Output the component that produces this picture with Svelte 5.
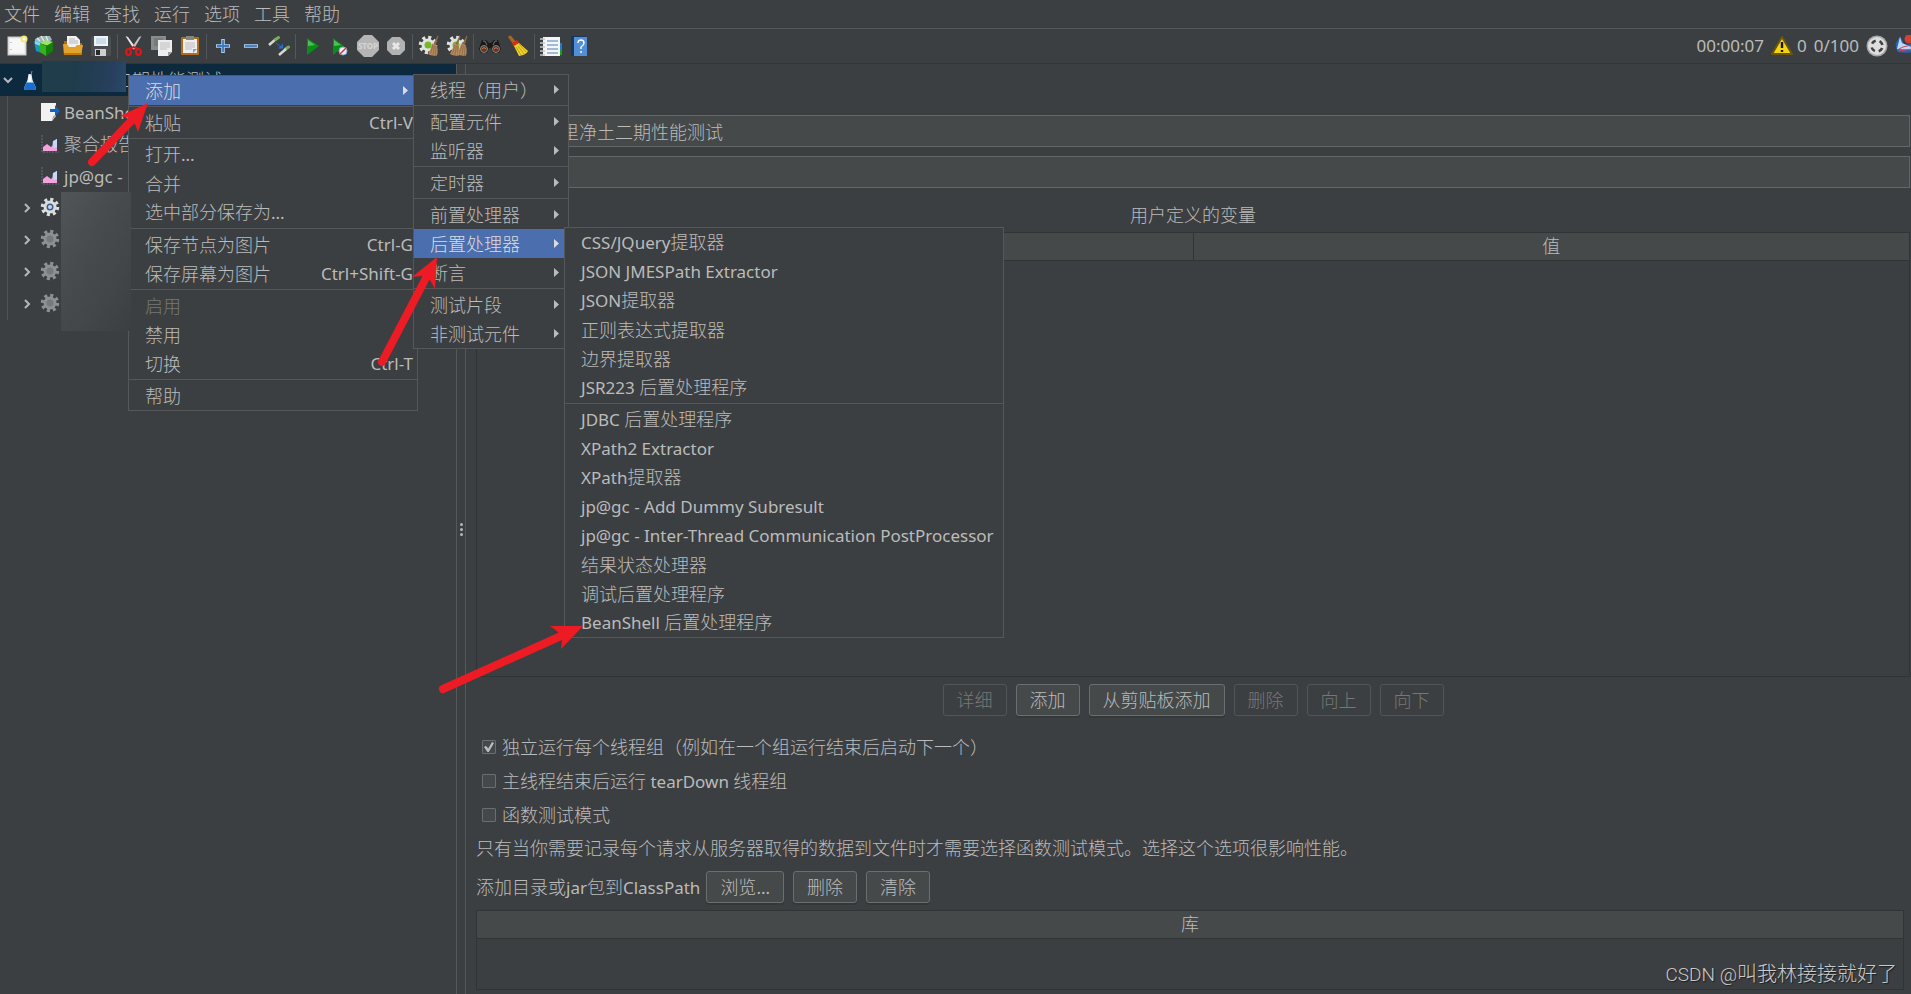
<script lang="ts">
	type MenuEntry = {
		label?: string;
		shortcut?: string;
		submenu?: boolean;
		active?: boolean;
		disabled?: boolean;
		separator?: boolean;
	};

	const separator: MenuEntry = { separator: true };

	const menuBar = ['文件', '编辑', '查找', '运行', '选项', '工具', '帮助'];

	const toolGroups = [
		['new', 'templates', 'open', 'save'],
		['cut', 'copy', 'paste'],
		['expand', 'collapse', 'toggle'],
		['start', 'start-no-timers', 'stop', 'shutdown'],
		['clear', 'clear-all'],
		['search', 'reset-search'],
		['function-helper', 'help']
	];

	const treeItems = [
		{ icon: 'preprocessor', label: 'BeanShell' },
		{ icon: 'report', label: '聚合报告' },
		{ icon: 'report', label: 'jp@gc -' }
	];

	const threadGroups = [true, false, false, false];

	const contextMenu: MenuEntry[] = [
		{ label: '添加', submenu: true, active: true },
		separator,
		{ label: '粘贴', shortcut: 'Ctrl-V' },
		separator,
		{ label: '打开...' },
		{ label: '合并' },
		{ label: '选中部分保存为...' },
		separator,
		{ label: '保存节点为图片', shortcut: 'Ctrl-G' },
		{ label: '保存屏幕为图片', shortcut: 'Ctrl+Shift-G' },
		separator,
		{ label: '启用', disabled: true },
		{ label: '禁用' },
		{ label: '切换', shortcut: 'Ctrl-T' },
		separator,
		{ label: '帮助' }
	];

	const addMenu: MenuEntry[] = [
		{ label: '线程（用户）', submenu: true },
		separator,
		{ label: '配置元件', submenu: true },
		{ label: '监听器', submenu: true },
		separator,
		{ label: '定时器', submenu: true },
		separator,
		{ label: '前置处理器', submenu: true },
		{ label: '后置处理器', submenu: true, active: true },
		{ label: '断言', submenu: true },
		separator,
		{ label: '测试片段', submenu: true },
		{ label: '非测试元件', submenu: true }
	];

	const postProcessorMenu: MenuEntry[] = [
		{ label: 'CSS/JQuery提取器' },
		{ label: 'JSON JMESPath Extractor' },
		{ label: 'JSON提取器' },
		{ label: '正则表达式提取器' },
		{ label: '边界提取器' },
		{ label: 'JSR223 后置处理程序' },
		separator,
		{ label: 'JDBC 后置处理程序' },
		{ label: 'XPath2 Extractor' },
		{ label: 'XPath提取器' },
		{ label: 'jp@gc - Add Dummy Subresult' },
		{ label: 'jp@gc - Inter-Thread Communication PostProcessor' },
		{ label: '结果状态处理器' },
		{ label: '调试后置处理程序' },
		{ label: 'BeanShell 后置处理程序' }
	];

	const variableActions = [
		{ label: '详细', enabled: false },
		{ label: '添加', enabled: true },
		{ label: '从剪贴板添加', enabled: true },
		{ label: '删除', enabled: false },
		{ label: '向上', enabled: false },
		{ label: '向下', enabled: false }
	];

	let planName = $state('里净土二期性能测试');
	let comment = $state('');

	let options = $state([
		{ label: '独立运行每个线程组（例如在一个组运行结束后启动下一个）', checked: true },
		{ label: '主线程结束后运行 tearDown 线程组', checked: false },
		{ label: '函数测试模式', checked: false }
	]);

	// Latin runs are set one size below the Chinese ones
	function runs(text: string) {
		return text.match(/[\x20-\x7e]+|[^\x20-\x7e]+/g) ?? [];
	}

	function isLatin(run: string) {
		return run.charCodeAt(0) < 127;
	}
</script>

{#snippet mixed(text: string)}
	{#each runs(text) as run}<span class:latin={isLatin(run)}>{run}</span>{/each}
{/snippet}

{#snippet broom(x: number, color: string)}
	<g transform="translate({x} 0)">
		<path d="M10 10 14.500 0.500l1 .4L12.500 11z" fill="#8a6a45" />
		<path d="M9 8.500l4.500 1.500q2 5 .5 10.500-5 1-9-1.500Q8 14 9 8.500z" fill={color} />
		<path d="M10 10 7.500 19M11.500 10.500 10 20M13 11l-.5 9.500" stroke="#7d5c37" stroke-width=".6" fill="none" />
	</g>
{/snippet}

{#snippet gear(fill: string, center: string)}
	<circle cx="10" cy="10" r="7.500" fill="none" stroke={fill} stroke-width="3.500" stroke-dasharray="3 2.890" />
	<circle cx="10" cy="10" r="6.500" {fill} />
	<circle cx="10" cy="10" r="3.500" fill={center} />
{/snippet}

{#snippet icon(name: string)}
	<svg class="icon" viewBox="0 0 22 22" aria-hidden="true">
		{#if name === 'new'}
			<rect x="2" y="2" width="18" height="18" fill="#ececec" stroke="#c4c4c4" />
			<path d="M4 4h14v14H4z" fill="#f7f7f7" />
			<path d="M5 7v1M5 14v1" stroke="#999" />
			<circle cx="18" cy="4" r="3.500" fill="#f3e779" />
			<circle cx="18" cy="4" r="1.500" fill="#fffce0" />
		{:else if name === 'templates'}
			<path d="M1 4 7 1l9 0 2 4-7 4-10-1z" fill="#9fb4b8" />
			<path d="M3 3l3 3M7 1l3 5M12 1l2 5" stroke="#e2ecee" stroke-width="1.300" />
			<path d="M0 6l8 2v10l-6-2z" fill="#1696c8" />
			<path d="M1 6l6 2v3L1 9z" fill="#7ed8f2" />
			<path d="M6 8l6-3 7 2-5 4z" fill="#9be565" />
			<path d="M6 8l6 3v10l-6-4z" fill="#37b317" />
			<path d="M12 11l7-4v9l-7 5z" fill="#167f0c" />
		{:else if name === 'open'}
			<path d="M2 6h5l2 2h11v12H2z" fill="#a9700d" />
			<path d="M5 1h9l4 4v9H5z" fill="#f2f2f2" />
			<path d="M7 4h6M7 6h9M7 8h9" stroke="#aaa" stroke-width=".8" />
			<path d="M1 9l1 11h17l2-10h-6l-2 2H7l-2-3z" fill="#e3a22a" />
			<path d="M2 18h17l-.3 2H2z" fill="#bd7a0a" />
		{:else if name === 'save'}
			<path d="M2 1h18l1 2v18H1V3z" fill="#4b4e50" />
			<path d="M4 1h14v10H4z" fill="#edf3f8" />
			<path d="M6 4h10M6 6h10M6 8h10" stroke="#9db9d1" stroke-width=".8" />
			<path d="M5 14h11v7H5z" fill="#cfcfcf" />
			<path d="M6 15h4v5H6z" fill="#292929" />
		{:else if name === 'cut'}
			<path d="M2.500 1 5 2l8 11-2 1.500z" fill="#e9e9e9" />
			<path d="M18.500 1 16 2 8.500 13l2 1.500z" fill="#c4c4c4" />
			<ellipse cx="5.500" cy="17" rx="2.400" ry="3" fill="none" stroke="#df1618" stroke-width="2.200" />
			<ellipse cx="15.500" cy="17" rx="2.400" ry="3" fill="none" stroke="#df1618" stroke-width="2.200" />
			<path d="M6 14l4.500-2 4.500 2" fill="none" stroke="#df1618" stroke-width="2" />
		{:else if name === 'copy'}
			<path d="M0 1h15v14H0z" fill="#898c8d" />
			<path d="M3 4h9M3 6h9M3 8h9M3 10h9" stroke="#66696a" />
			<path d="M7 5h14v12l-4 4H7z" fill="#ededed" />
			<path d="M9 8h10M9 10h10M9 12h10M9 14h7" stroke="#bdbdbd" />
			<path d="M17 21v-4h4z" fill="#9c9c9c" />
		{:else if name === 'paste'}
			<rect x="2" y="2" width="18" height="18" rx="1" fill="#b16d19" />
			<path d="M4 4h14v14H4z" fill="#eee" />
			<path d="M7 1h8v4H7z" fill="#83887f" />
			<path d="M6 8h10M6 10h10M6 12h10M6 14h7" stroke="#bcbcbc" />
			<path d="M14 18v-4h4z" fill="#9b9b9b" />
		{:else if name === 'expand'}
			<path d="M11 4v14M4 11h14" stroke="#a9cdf0" stroke-width="3.600" />
			<path d="M11 5v12M5 11h12" stroke="#3f78bd" stroke-width="1.800" />
		{:else if name === 'collapse'}
			<path d="M4 11h14" stroke="#a9cdf0" stroke-width="3.600" />
			<path d="M5 11h12" stroke="#3f78bd" stroke-width="1.800" />
		{:else if name === 'toggle'}
			<path d="M1 10 8 4" stroke="#d5d8d5" stroke-width="2.500" />
			<path d="M7.500 4.500 10.500 2.500M17.500 14l3-2" stroke="#77ad60" stroke-width="3" stroke-linecap="round" />
			<path d="M11 20l7-6" stroke="#d5d8d5" stroke-width="2.500" />
			<path d="M8 8l5 4" stroke="#286bd6" />
			<path d="M10 13.500h5v-5z" fill="#286bd6" />
		{:else if name === 'start'}
			<path d="M6 3l12 8-12 9z" fill="#098f18" />
			<path d="M7 5l7 5-7 1z" fill="#4fbf54" />
		{:else if name === 'start-no-timers'}
			<path d="M4 3l11 8-11 9z" fill="#098f18" />
			<path d="M5 5l7 5-7 1z" fill="#4fbf54" />
			<circle cx="14" cy="16" r="4" fill="#e9f1fb" stroke="#86add8" />
			<path d="M11 19l6-6" stroke="#df2c2c" stroke-width="1.500" />
		{:else if name === 'stop'}
			<path d="M7 0h8l7 7v8l-7 7H7l-7-7V7z" fill="#b5b5b5" />
			<text x="11" y="14" text-anchor="middle" font-size="8" font-weight="700" fill="#d5d5d5">STOP</text>
		{:else if name === 'shutdown'}
			<path d="M7 2h8l5 5v8l-5 5H7l-5-5V7z" fill="#b2b2b2" />
			<path d="M8 8l6 6M14 8l-6 6" stroke="#e8e8e8" stroke-width="3" />
		{:else if name === 'clear'}
			{@render gear('#e2e3e1', '#73b928')}
			{@render broom(5, '#b48b5f')}
		{:else if name === 'clear-all'}
			{@render gear('#e2e3e1', '#73b928')}
			{@render broom(-1, '#b48b5f')}
			{@render broom(6, '#b48b5f')}
		{:else if name === 'search'}
			<path d="M3 5h4l3 3h2l3-3h4l3 9-2 4h-6l-2-5h-2l-2 5H2l-2-4z" fill="#191919" />
			<path d="M4 6h2l2 4M18 6h-2l-2 4" stroke="#777" fill="none" />
			<circle cx="5" cy="14" r="3.500" fill="#5e3826" stroke="#858585" />
			<circle cx="17" cy="14" r="3.500" fill="#5e3826" stroke="#858585" />
			<path d="M3 14q2-3 4 0M15 14q2-3 4 0" stroke="#dc7746" fill="none" />
		{:else if name === 'reset-search'}
			<path d="M1 2q2-3 4 0l4 5-3 2z" fill="#a96524" />
			<path d="M5 8l5-3 2 3-5 4z" fill="#d92c17" />
			<path d="M7 11l5-3 9 8q-2 4-9 5z" fill="#f1d32a" />
			<path d="M9 12l5 8M11 11l6 8M12 9l7 8" stroke="#b38c0b" stroke-width=".8" />
		{:else if name === 'function-helper'}
			<path d="M18 8h4v6h-4z" fill="#147fd8" />
			<path d="M18 14h4v6h-4z" fill="#1a9d20" />
			<path d="M3 2h17v19H3z" fill="#f3f5f7" />
			<path d="M0 4h5M0 8h5M0 12h5M0 16h5M0 20h5" stroke="#c4c6c7" stroke-width="1.500" />
			<path d="M7 6h11M7 10h11M7 14h11M7 18h11" stroke="#4f81b5" />
		{:else if name === 'help'}
			<path d="M3 1h15v20H3z" fill="#18375e" />
			<path d="M6 2h13v19H6z" fill="#518fd8" />
			<path d="M10 8q0-3 3-3t3 3q0 2-3 4v2M13 16v2" fill="none" stroke="#fff" stroke-width="1.400" />
		{:else if name === 'warning'}
			<path d="M11 2 21 19H1z" fill="#f5d313" stroke="#685609" stroke-width="2" stroke-linejoin="round" />
			<path d="M11 7v6M11 15v2" stroke="#151515" stroke-width="2.400" />
		{:else if name === 'threads'}
			<circle cx="11" cy="11" r="10.500" fill="#a8a8a8" />
			<circle cx="11" cy="11" r="9" fill="#dedede" />
			<circle cx="11" cy="11" r="5.500" fill="none" stroke="#3f4244" stroke-width="2.600" stroke-dasharray="4.640 4" stroke-dashoffset="-2" />
		{:else if name === 'feather'}
			<path d="M1 8 5 1l4 8 13 1v6q-12 3-19 1-3-4-2-9z" fill="#2a62bd" />
			<path d="M2 14l17 1-3-3-9-4-2-6z" fill="#bfd8f2" />
			<path d="M2 15l6-3 8-2M4 16l13-2" stroke="#cf4554" fill="none" />
			<circle cx="14" cy="4" r="4.500" fill="#d24134" />
		{:else if name === 'test-plan'}
			<path d="M9.500 5h3l1 6 3.500 8q0 2-2 2H7q-2 0-2-2l3.500-8z" fill="#dce8f3" />
			<path d="M7.500 13.500h7l2.500 5.500q0 2-2 2H7q-2 0-2-2z" fill="#1770cf" />
			<path d="M10 6h1.500l1 7H9z" fill="#f7fbfe" />
			<path d="M12 6l1-4" stroke="#838d94" />
		{:else if name === 'preprocessor'}
			<path d="M1 2h15v13l-4 5H1z" fill="#f2f2f2" />
			<path d="M12 20l1-5 3-1z" fill="#a8a8a8" />
			<path d="M10 8h5V4l5 6-5 5v-4h-5z" fill="#1264c1" />
		{:else if name === 'report'}
			<path d="M2 2v17h17" stroke="#6b6e70" fill="none" stroke-dasharray="2 1" />
			<path d="M12 17 13 8l4-2v11z" fill="#c5d8f5" />
			<path d="M3 18v-4l4-3 4 3 3-3 3 2v5z" fill="#f2a3dd" />
			<path d="M13 12 14 8l3-2v8l-3 1z" fill="#c5d8f5" />
		{:else if name === 'group-on'}
			{@render gear('#dbdddf', '#3c608e')}
			<circle cx="10" cy="10" r="2" fill="#c3d6e8" />
		{:else if name === 'group-off'}
			{@render gear('#8e9091', '#77797a')}
		{/if}
	</svg>
{/snippet}

{#snippet menu(entries: MenuEntry[])}
	{#each entries as entry}
		{#if entry.separator}
			<div class="menu-separator" role="separator"></div>
		{:else}
			<button class="menu-item" class:active={entry.active} type="button" role="menuitem" disabled={entry.disabled}>
				<span>{@render mixed(entry.label ?? '')}</span>
				{#if entry.shortcut}<span class="shortcut latin">{entry.shortcut}</span>{/if}
				{#if entry.submenu}<span class="submenu-arrow"></span>{/if}
			</button>
		{/if}
	{/each}
{/snippet}

<div class="window">
	<nav class="menu-bar">
		{#each menuBar as item}
			<button type="button">{item}</button>
		{/each}
	</nav>

	<header class="toolbar">
		{#each toolGroups as group, i}
			{#if i > 0}<span class="tool-separator"></span>{/if}
			{#each group as tool}
				<button class="tool" type="button" aria-label={tool}>{@render icon(tool)}</button>
			{/each}
		{/each}

		<div class="status latin">
			<span>00:00:07</span>
			<button class="warnings" type="button">{@render icon('warning')}<span>0</span></button>
			<span>0/100</span>
			{@render icon('threads')}
			<span class="logo">{@render icon('feather')}</span>
		</div>
	</header>

	<div class="workspace">
		<aside class="tree">
			<div class="tree-row root">
				<svg class="chevron" viewBox="0 0 10 10" aria-hidden="true"><path d="M1 3l4 4 4-4" /></svg>
				{@render icon('test-plan')}
				<span class="root-name">里净土二期性能测试</span>
			</div>
			<div class="tree-children">
				{#each treeItems as item}
					<div class="tree-row leaf">
						{@render icon(item.icon)}
						<span>{@render mixed(item.label)}</span>
					</div>
				{/each}
				{#each threadGroups as enabled}
					<div class="tree-row group">
						<svg class="chevron" viewBox="0 0 10 10" aria-hidden="true"><path d="M3 1l4 4-4 4" /></svg>
						{@render icon(enabled ? 'group-on' : 'group-off')}
					</div>
				{/each}
			</div>
		</aside>

		<div class="divider"><i></i><i></i><i></i></div>

		<main class="plan">
			<div class="fields">
				<input type="text" aria-label="名称" bind:value={planName} />
				<input type="text" aria-label="注释" bind:value={comment} />
			</div>

			<h2>用户定义的变量</h2>
			<div class="table-frame variables">
				<table>
					<thead>
						<tr><th aria-label="名称"></th><th>值</th></tr>
					</thead>
				</table>
			</div>

			<div class="actions">
				{#each variableActions as action}
					<button class="button" type="button" disabled={!action.enabled}>{action.label}</button>
				{/each}
			</div>

			<div class="options">
				{#each options as option}
					<label>
						<input type="checkbox" bind:checked={option.checked} />
						<span>{@render mixed(option.label)}</span>
					</label>
				{/each}
			</div>

			<p class="hint">只有当你需要记录每个请求从服务器取得的数据到文件时才需要选择函数测试模式。选择这个选项很影响性能。</p>

			<div class="classpath">
				<span>{@render mixed('添加目录或jar包到ClassPath')}</span>
				<div class="classpath-buttons">
					<button class="button" type="button">{@render mixed('浏览...')}</button>
					<button class="button" type="button">删除</button>
					<button class="button" type="button">清除</button>
				</div>
			</div>

			<div class="table-frame library">
				<table>
					<thead>
						<tr><th>库</th></tr>
					</thead>
				</table>
			</div>
		</main>
	</div>

	<div class="menu context" role="menu">{@render menu(contextMenu)}</div>
	<div class="menu add" role="menu">{@render menu(addMenu)}</div>
	<div class="menu post" role="menu">{@render menu(postProcessorMenu)}</div>

	<div class="mask mask-root"></div>
	<div class="mask mask-groups"></div>

	<svg class="annotations" viewBox="0 0 600 700" aria-hidden="true">
		<path class="shaft" d="M92 162 134 118M382 362 427 276M443 689 561 636" />
		<path d="M148 103 120 116l9 2 6 6 3 8zM437 257 412 277l10-1 8 4 5 9zM583 626 550 626l8 6 4 8-1 9z" />
	</svg>

	<div class="watermark"><span>CSDN @</span>叫我林接接就好了</div>
</div>

<style>
	:global(body) {
		margin: 0;
		background: #3c3f41;
	}

	.window {
		position: relative;
		display: flex;
		flex-direction: column;
		min-height: 100vh;
		overflow: hidden;
		background: #3c3f41;
		color: #bbb;
		font-family: 'Noto Sans', 'Noto Sans CJK SC', sans-serif;
		font-size: 18px;
		font-weight: 300;
		line-height: 28px;
	}

	button,
	input {
		margin: 0;
		font: inherit;
		color: inherit;
		box-sizing: border-box;
	}

	button {
		padding: 0;
		border: 0;
		background: none;
		white-space: nowrap;
	}

	.latin {
		font-size: 17px;
		font-weight: 400;
		white-space: pre;
	}

	.icon {
		display: block;
		flex: none;
		width: 22px;
		height: 22px;
	}

	.menu-bar {
		display: flex;
		gap: 14px;
		height: 28px;
		padding-left: 4px;
		border-bottom: 1px solid #555758;
	}

	.menu-bar button {
		line-height: 26px;
	}

	.toolbar {
		display: flex;
		align-items: center;
		height: 34px;
		padding-left: 3px;
		border-bottom: 1px solid #323435;
	}

	.tool {
		display: flex;
		justify-content: center;
		width: 28px;
	}

	.tool-separator {
		width: 1px;
		height: 25px;
		margin: 0 2px;
		background: #555758;
	}

	.status {
		display: flex;
		align-items: center;
		gap: 7px;
		margin-left: auto;
	}

	.warnings {
		display: flex;
		align-items: center;
		gap: 4px;
	}

	.logo {
		width: 16px;
		overflow: hidden;
	}

	.workspace {
		display: flex;
		flex: 1;
	}

	.tree {
		flex: none;
		width: 456px;
	}

	.tree-row {
		display: flex;
		align-items: center;
		height: 32px;
	}

	.root {
		padding-left: 3px;
		background: #0d293e;
	}

	.root .icon {
		margin-left: 6px;
	}

	.root-name {
		margin-left: 19px;
		color: #bbb;
	}

	.chevron {
		width: 10px;
		height: 10px;
		fill: none;
		stroke: #b5b8b9;
		stroke-width: 2;
	}

	.tree-children {
		margin-left: 7px;
		border-left: 1px solid #515456;
	}

	.leaf {
		gap: 2px;
		padding-left: 32px;
	}

	.group {
		gap: 8px;
		padding-left: 14px;
	}

	.divider {
		display: flex;
		flex: none;
		flex-direction: column;
		align-items: center;
		justify-content: center;
		gap: 2px;
		width: 8px;
		border: solid #555758;
		border-width: 0 1px;
	}

	.divider i {
		width: 3px;
		height: 3px;
		border-radius: 50%;
		background: #b5b8b9;
	}

	.plan {
		display: flex;
		flex: 1;
		flex-direction: column;
		min-width: 0;
		padding: 51px 1px 4px 10px;
	}

	.fields {
		display: flex;
		flex-direction: column;
		gap: 9px;
		padding-left: 58px;
	}

	.fields input {
		height: 32px;
		padding: 0 26px;
		border: 1px solid #646667;
		background: #45494a;
		outline: none;
	}

	h2 {
		margin: 0;
		padding-top: 10px;
		font-size: 18px;
		font-weight: inherit;
		line-height: 34px;
		text-align: center;
	}

	.table-frame {
		border: 1px solid #313435;
	}

	.variables {
		flex: 1;
	}

	.library {
		height: 78px;
		margin: 7px 6px 0 0;
	}

	table {
		width: 100%;
		table-layout: fixed;
		border-collapse: collapse;
	}

	th {
		height: 27px;
		padding: 0;
		border-bottom: 1px solid #313435;
		background: #45494a;
		font-weight: inherit;
		line-height: 27px;
	}

	th + th {
		border-left: 1px solid #313435;
	}

	.actions {
		display: flex;
		justify-content: center;
		gap: 9px;
		margin-top: 7px;
	}

	.button {
		height: 32px;
		padding: 0 13px;
		border: 1px solid #6b6e70;
		border-radius: 3px;
		background: #45494a;
		box-shadow: 0 2px 0 #353839;
		line-height: 30px;
	}

	.button:disabled {
		border-color: #525557;
		background: none;
		box-shadow: none;
		color: #777;
	}

	.options {
		margin-top: 14px;
	}

	.options label {
		display: flex;
		align-items: center;
		gap: 6px;
		height: 34px;
		padding-left: 6px;
	}

	.options input {
		position: relative;
		width: 14px;
		height: 14px;
		border: 1px solid #6b6e70;
		border-radius: 1px;
		background: #43484a;
		appearance: none;
	}

	.options input:checked::after {
		content: '';
		position: absolute;
		inset: 1px;
		background: #bbb;
		clip-path: polygon(0 50%, 20% 38%, 42% 65%, 80% 0, 100% 10%, 48% 100%, 34% 100%);
	}

	.hint {
		margin: 0;
		line-height: 32px;
	}

	.classpath {
		display: flex;
		align-items: center;
		gap: 6px;
		margin-top: 7px;
	}

	.classpath-buttons {
		display: flex;
		gap: 9px;
	}

	.menu {
		position: absolute;
		border: 1px solid #555758;
		background: #3c3f41;
	}

	.context {
		top: 75px;
		left: 128px;
		width: 288px;
	}

	.add {
		top: 74px;
		left: 413px;
		width: 154px;
	}

	.post {
		top: 227px;
		left: 564px;
		width: 438px;
	}

	.menu-item {
		display: flex;
		align-items: center;
		width: 100%;
		height: 29px;
		padding-left: 16px;
		line-height: 28px;
	}

	.menu-item.active {
		background: #4b6eaf;
		color: #dcdcdc;
	}

	.menu-item:disabled {
		color: #777;
	}

	.shortcut {
		margin-left: auto;
		padding-right: 4px;
	}

	.submenu-arrow {
		width: 5px;
		height: 9px;
		margin: 0 9px 0 auto;
		background: currentColor;
		clip-path: polygon(0 0, 100% 50%, 0 100%);
	}

	.menu-separator {
		height: 1px;
		margin: 1px 0;
		background: #555758;
	}

	.mask {
		position: absolute;
	}

	.mask-root {
		top: 61px;
		left: 42px;
		width: 84px;
		height: 31px;
		background: linear-gradient(100deg, #203e4a, #1f3c4c 40%, #273f5c 80%, #2a496a);
	}

	.mask-groups {
		top: 192px;
		left: 61px;
		width: 70px;
		height: 139px;
		background: linear-gradient(120deg, #525557, #484b4d 40%, #434648 70%, #3c3f41);
	}

	.annotations {
		position: absolute;
		top: 0;
		left: 0;
		width: 600px;
		height: 700px;
		fill: #ed1c24;
		pointer-events: none;
	}

	.shaft {
		fill: none;
		stroke: #ed1c24;
		stroke-width: 8;
		stroke-linecap: round;
	}

	.watermark {
		position: absolute;
		right: 14px;
		bottom: 5px;
		color: #c9cacb;
		font-size: 20px;
		text-shadow: 1px 1px 1px #1c1d1e;
		white-space: pre;
	}

	.watermark span {
		font-family: Roboto, sans-serif;
		font-size: 19px;
	}
</style>
